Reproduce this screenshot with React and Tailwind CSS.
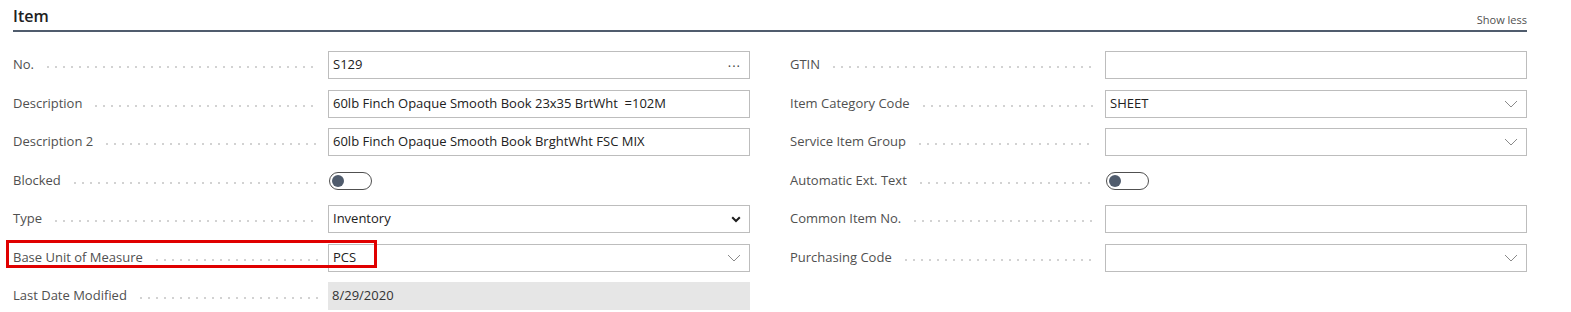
import React from "react";

const Chevron = () => (
  <svg width="14" height="8" viewBox="0 0 14 8" className="shrink-0">
    <path d="M1 1l6 6 6-6" fill="none" stroke="#8a8a8a" strokeWidth="1" />
  </svg>
);

const BoldChevron = () => (
  <svg width="10" height="7" viewBox="0 0 10 7" className="shrink-0">
    <path d="M1.2 1.2l3.8 3.8 3.8-3.8" fill="none" stroke="#1f1f1f" strokeWidth="2" />
  </svg>
);

const Dots = () => (
  <div className="flex-1 ml-[10px] mr-[10px] h-[2px] mt-[4px] bg-[radial-gradient(circle,#d2d2d2_0.9px,transparent_1.1px)] bg-[length:8px_2px] bg-repeat-x"></div>
);

function Row({ label, children, highlight }) {
  return (
    <div className="relative flex h-[28px] items-center">
      <div className="flex w-[315px] items-center self-stretch">
        <span className="text-[#505050] whitespace-nowrap">{label}</span>
        <Dots />
      </div>
      <div className="flex-1 self-stretch flex items-center">{children}</div>
      {highlight && (
        <div className="absolute left-[-7px] top-[-4px] w-[371px] h-[28px] border-[3px] border-[#e00000] pointer-events-none"></div>
      )}
    </div>
  );
}

const Input = ({ value, right }) => (
  <div className="flex h-full w-full items-center justify-between border border-[#bdbdbd] bg-white pl-[4px] pr-[8px] text-[#212121]">
    <span className="whitespace-pre">{value}</span>
    {right}
  </div>
);

const Readonly = ({ value }) => (
  <div className="flex h-full w-full items-center bg-[#e6e6e6] pl-[4px] text-[#333]">{value}</div>
);

const Toggle = () => (
  <div className="ml-[1px] flex h-[18px] w-[43px] items-center rounded-full border border-[#505050] bg-white px-[2px]">
    <div className="h-[12px] w-[12px] rounded-full bg-[#505c6d]"></div>
  </div>
);

export default function App() {
  return (
    <div
      className="w-[1571px] h-[312px] bg-white overflow-hidden text-[13px]"
      style={{ fontFamily: '"Open Sans", "Noto Sans", Arial, sans-serif' }}
    >
      <div className="ml-[13px] w-[1514px]">
        <div className="flex h-[32px] items-end justify-between border-b-2 border-[#505c6d] pb-[5px]">
          <span className="text-[16px] font-semibold text-[#212121] leading-none pb-[1px]">Item</span>
          <span className="text-[11px] text-[#505050] leading-none">Show less</span>
        </div>
        <div className="mt-[19px] grid grid-cols-2 gap-x-[40px]">
          <div className="flex flex-col gap-[10.5px]">
            <Row label="No.">
              <Input value="S129" right={<span className="text-[#444] tracking-[1px] text-[13px] leading-none -mt-[6px]">...</span>} />
            </Row>
            <Row label="Description">
              <Input value="60lb Finch Opaque Smooth Book 23x35 BrtWht  =102M" />
            </Row>
            <Row label="Description 2">
              <Input value="60lb Finch Opaque Smooth Book BrghtWht FSC MIX" />
            </Row>
            <Row label="Blocked">
              <Toggle />
            </Row>
            <Row label="Type">
              <Input value="Inventory" right={<BoldChevron />} />
            </Row>
            <Row label="Base Unit of Measure" highlight>
              <Input value="PCS" right={<Chevron />} />
            </Row>
            <Row label="Last Date Modified">
              <Readonly value="8/29/2020" />
            </Row>
          </div>
          <div className="flex flex-col gap-[10.5px]">
            <Row label="GTIN">
              <Input value="" />
            </Row>
            <Row label="Item Category Code">
              <Input value="SHEET" right={<Chevron />} />
            </Row>
            <Row label="Service Item Group">
              <Input value="" right={<Chevron />} />
            </Row>
            <Row label="Automatic Ext. Text">
              <Toggle />
            </Row>
            <Row label="Common Item No.">
              <Input value="" />
            </Row>
            <Row label="Purchasing Code">
              <Input value="" right={<Chevron />} />
            </Row>
          </div>
        </div>
      </div>
    </div>
  );
}
